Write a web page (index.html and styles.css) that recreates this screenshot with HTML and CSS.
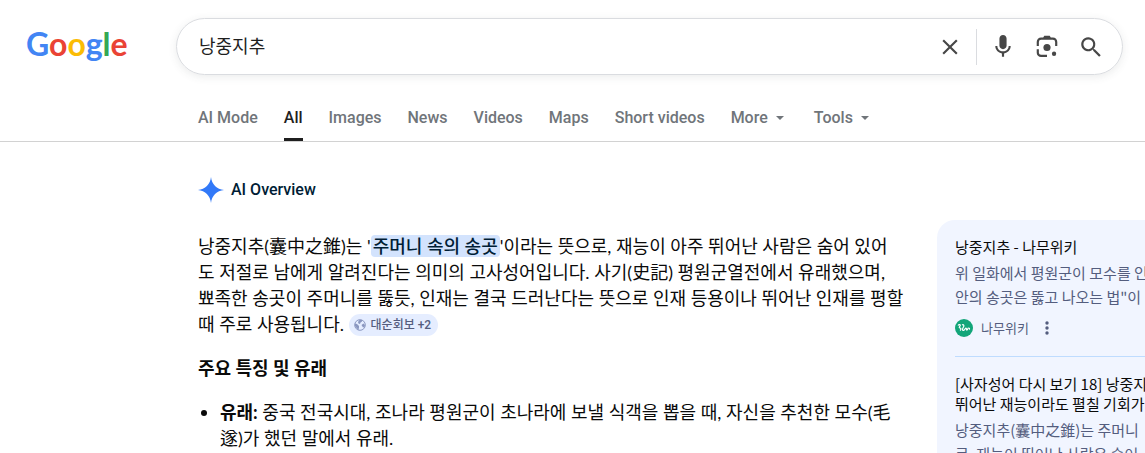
FILE: index.html
```html
<!DOCTYPE html>
<html lang="en">
<head>
  <meta charset="UTF-8">
  <meta name="viewport" content="width=device-width, initial-scale=1.0">
  <title>낭중지추 - Google Search</title>
  <link rel="stylesheet" href="styles.css">
</head>
<body>

  <header class="header">
    <a class="logo" href="#" aria-label="Google"><span class="blue">G</span><span class="red">o</span><span class="yellow">o</span><span class="blue">g</span><span class="green">l</span><span class="red">e</span></a>

    <form class="search" role="search">
      <input class="search-input" type="text" aria-label="Search" value="낭중지추">
      <button class="icon-button" type="reset" aria-label="Clear">
        <svg viewBox="0 0 24 24" width="26" height="26"><path d="M19 6.4 17.6 5 12 10.6 6.4 5 5 6.4l5.6 5.6L5 17.6 6.4 19l5.6-5.6 5.6 5.6 1.4-1.4-5.6-5.6z"/></svg>
      </button>
      <span class="divider"></span>
      <button class="icon-button" type="button" aria-label="Search by voice">
        <svg viewBox="0 0 24 24" width="26" height="26"><path d="M12 14c1.900 0 3.300-1.500 3.300-3.300V4.300C15.300 2.500 13.900 1 12 1S8.700 2.500 8.700 4.300v6.400C8.700 12.500 10.100 14 12 14z"/><path d="M17.200 11c0 2.900-2.300 5-5.200 5s-5.200-2.100-5.200-5H4.900c0 3.500 2.700 6.300 6.100 6.900V21h2v-3.100c3.400-.6 6.100-3.400 6.100-6.900z"/></svg>
      </button>
      <button class="icon-button" type="button" aria-label="Search by image">
        <svg viewBox="0 0 24 24" width="26" height="26"><path d="M8.500 3.300 9.500 1.500h5l1 1.800h2A4 4 0 0 1 21.500 7.300V11h-2V7.300a2 2 0 0 0-2-2h-11a2 2 0 0 0-2 2V11h-2V7.300a4 4 0 0 1 4-4z"/><path d="M2.500 14h2v3.200a2 2 0 0 0 2 2H12v2H6.500a4 4 0 0 1-4-4z"/><circle cx="12" cy="12.500" r="3.300"/><circle cx="18.500" cy="18.200" r="2"/></svg>
      </button>
      <button class="icon-button" type="submit" aria-label="Google Search">
        <svg viewBox="0 0 24 24" width="26" height="26"><path d="M15.500 14h-.8l-.3-.3A6.500 6.500 0 1 0 13.700 14.400l.3.3v.8l5.500 5.500 1.500-1.500zm-6 0a4.500 4.500 0 1 1 0-9 4.500 4.500 0 0 1 0 9z"/></svg>
      </button>
    </form>
  </header>

  <nav class="tabs">
    <a href="#">AI Mode</a>
    <a class="active" href="#">All</a>
    <a href="#">Images</a>
    <a href="#">News</a>
    <a href="#">Videos</a>
    <a href="#">Maps</a>
    <a href="#">Short videos</a>
    <button type="button">More <span class="caret"></span></button>
    <button type="button">Tools <span class="caret"></span></button>
  </nav>

  <main class="content">
    <section class="overview">
      <h1 class="overview-title">
        <svg viewBox="0 0 24 24" width="26" height="26"><path d="M12 0c.6 6.600 5.400 11.400 12 12-6.600.6-11.400 5.400-12 12-.6-6.600-5.400-11.400-12-12C6.600 11.400 11.400 6.600 12 0z"/></svg>
        AI Overview
      </h1>

      <p class="summary">낭중지추(囊中之錐)는 '<mark>주머니 속의 송곳</mark>'이라는 뜻으로, 재능이 아주 뛰어난 사람은 숨어 있어<wbr>도 저절로 남에게 알려진다는 의미의 고사성어입니다. 사기(史記) 평원군열전에서 유래했으며, 뾰족한 송곳이 주머니를 뚫듯, 인재는 결국 드러난다는 뜻으로 인재 등용이나 뛰어난 인재를 평할 때 주로 사용됩니다.
        <button class="chip" type="button">
          <svg viewBox="0 0 12 12" width="12" height="12"><circle cx="6" cy="6" r="5.300" fill="none" stroke="#8a97c0"/><path d="M1 4.500 3 5l2 2v1.500L4.500 11 3 9.500 1 7zM5.500 1h2.500L8 2.500 6.500 3.500 6 5 4.500 4.500 4 3zM7.500 6l2-1.500L11 6l-.5 2L9 8.500z" fill="#8a97c0"/></svg>
          대순회보 +2
        </button>
      </p>

      <h2 class="subtitle">주요 특징 및 유래</h2>
      <ul class="facts">
        <li><strong>유래:</strong> 중국 전국시대, 조나라 평원군이 초나라에 보낼 식객을 뽑을 때, 자신을 추천한 모수(毛遂)가 했던 말에서 유래.</li>
      </ul>
    </section>

    <aside class="sources">
      <article class="source">
        <h3>낭중지추 - 나무위키</h3>
        <p>위 일화에서 평원군이 모수를 인<br>안의 송곳은 뚫고 나오는 법"이</p>
        <footer>
          <svg viewBox="0 0 18 18" width="18" height="18"><circle cx="9" cy="9" r="9" fill="#12a579"/><path d="M3 6.500c1-1.500 3-1 2 .5S4 9 5 9s1.500 1.500 0 2.500M7 6c1.500-1 2.500.5 1.500 2S7 11.500 8.500 11.500 10 9 11 9s0 2.500 1 2 .5-2 1.500-2 1.500 1 .5 1.500" fill="none" stroke="#fff" stroke-width="1.200"/></svg>
          <span>나무위키</span>
          <button class="menu" type="button" aria-label="About this result">
            <svg viewBox="0 0 4 16" width="4" height="16"><circle cx="2" cy="3" r="1.700"/><circle cx="2" cy="8" r="1.700"/><circle cx="2" cy="13" r="1.700"/></svg>
          </button>
        </footer>
      </article>
      <article class="source">
        <h3>[사자성어 다시 보기 18] 낭중지<br>뛰어난 재능이라도 펼칠 기회가</h3>
        <p>낭중지추(囊中之錐)는 주머니<br>로, 재능이 뛰어난 사람은 숨어</p>
      </article>
    </aside>
  </main>

</body>
</html>
```

FILE: styles.css
```css
* {
  box-sizing: border-box;
}

body {
  margin: 0;
  height: 100vh;
  overflow: hidden;
  background: #fff;
  color: #0a0a0a;
  font-family: Roboto, "Noto Sans CJK KR", sans-serif;
}

button {
  border: 0;
  padding: 0;
  background: none;
  font: inherit;
  color: inherit;
  cursor: pointer;
}

a {
  color: inherit;
  text-decoration: none;
}

svg {
  display: block;
  flex: none;
}

/* Header */
.header {
  display: flex;
  align-items: flex-start;
  padding: 18px 22px 0 26px;
}

.logo {
  width: 150px;
  font: 700 32px/52px Lato, sans-serif;
}

.blue { color: #4285f4; }
.red { color: #ea4335; }
.yellow { color: #fbbc05; }
.green { color: #34a853; }

.search {
  flex: 1;
  display: flex;
  align-items: center;
  gap: 18px;
  height: 57px;
  padding: 0 18px 0 22px;
  border: 1px solid #dadce0;
  border-radius: 29px;
  box-shadow: 0 2px 8px rgba(60, 64, 67, 0.1);
}

.search-input {
  flex: 1;
  min-width: 0;
  border: 0;
  padding: 0 0 4px;
  outline: none;
  background: none;
  color: #1f1f1f;
  font: 18px/26px "Noto Sans CJK KR", sans-serif;
}

.icon-button svg {
  fill: #474747;
}

.divider {
  width: 1px;
  height: 36px;
  margin: 0 -5px;
  background: #dadce0;
}

/* Tabs */
.tabs {
  display: flex;
  gap: 26px;
  height: 67px;
  padding: 20px 198px 0;
  border-bottom: 1px solid #d2d2d2;
  color: #70757a;
  font-size: 16px;
  font-weight: 500;
  line-height: 46px;
  white-space: nowrap;
}

.tabs .active {
  color: #1f1f1f;
  border-bottom: 3px solid #1f1f1f;
}

.tabs button {
  display: flex;
  align-items: center;
  gap: 8px;
  margin-right: 4px;
}

.caret {
  border: 4px solid transparent;
  border-top-color: #70757a;
  border-bottom: 0;
}

/* Results */
.content {
  display: flex;
  gap: 33px;
  padding-left: 198px;
  overflow: hidden;
}

.overview {
  flex: none;
  width: 706px;
  padding-top: 35px;
  font-family: Lato, "Noto Sans CJK KR", sans-serif;
  font-size: 18px;
  line-height: 26px;
}

.overview-title {
  display: flex;
  align-items: center;
  gap: 7px;
  margin: 0 0 30px;
  color: #001d35;
  font: 500 16px/26px Roboto, sans-serif;
}

.overview-title svg {
  fill: #3279f8;
}

.summary {
  margin: 0 0 18px;
}

.summary mark {
  padding: 0 2px;
  border-radius: 4px;
  background: #d3e3fd;
  color: #001d35;
  font-weight: 500;
}

.chip {
  display: inline-flex;
  align-items: center;
  gap: 5px;
  height: 22px;
  padding: 0 7px 0 5px;
  border-radius: 11px;
  background: #e5edff;
  color: #545d7e;
  font: 500 12px/22px Roboto, "Noto Sans CJK KR", sans-serif;
}

.subtitle {
  margin: 0 0 18px;
  font-size: 18px;
  font-weight: 700;
}

.facts {
  margin: 0;
  padding-left: 22px;
}

/* Source panel */
.sources {
  flex: none;
  width: 410px;
  margin-top: 78px;
  padding: 17px 18px;
  border-radius: 18px;
  background: #f1f5ff;
  color: #545d7e;
  font-family: "Noto Sans CJK KR", sans-serif;
  font-size: 15px;
}

.source + .source {
  margin-top: 18px;
  padding-top: 17px;
  border-top: 1px solid #bfdcff;
}

.source h3 {
  margin: 0;
  color: #0a0a0a;
  font-size: 15px;
  font-weight: 400;
  line-height: 20px;
}

.source p {
  margin: 4px 0 0;
  line-height: 24px;
}

.source footer {
  display: flex;
  align-items: center;
  gap: 8px;
  margin-top: 9px;
  font-size: 13px;
  line-height: 20px;
}

.menu {
  margin-left: 8px;
}

.menu svg {
  fill: #545d7e;
}
```
